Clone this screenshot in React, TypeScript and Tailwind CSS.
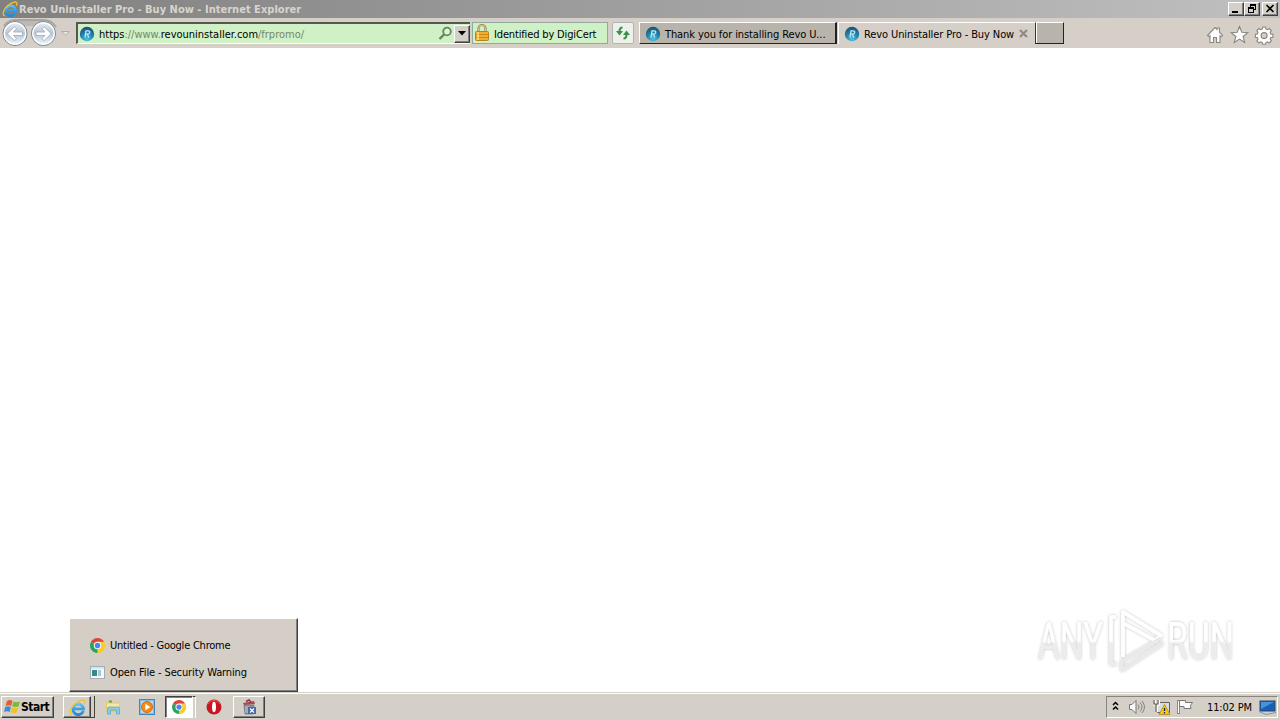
import type { ReactNode } from "react"


const raised = "border border-t-white border-l-white border-r-[#404040] border-b-[#404040] shadow-[inset_-1px_-1px_0_#808080]"

function RevoIcon() {
    return (
        <svg width="16" height="16" viewBox="0 0 16 16" className="shrink-0">
            <defs>
                <radialGradient id="revo" cx="50%" cy="85%" r="85%">
                    <stop offset="0" stopColor="#4cc4e4" />
                    <stop offset="0.55" stopColor="#1f7ea9" />
                    <stop offset="1" stopColor="#1d4f70" />
                </radialGradient>
            </defs>
            <circle cx="8" cy="8" r="7.2" fill="url(#revo)" />
            <path d="M6 11.500 7 4.800h2q2 0 1.700 1.800-.3 1.600-2.400 1.600H6.700M8.400 8.300l1.400 3.200" fill="none" stroke="#c5e6f2" strokeWidth="1.300" />
        </svg>
    )
}

function ExplorerIcon({ size = 16 }: { size?: number }) {
    return (
        <svg width={size} height={size} viewBox="0 0 16 16" className="shrink-0">
            <defs>
                <linearGradient id="explorer" x1="0" y1="2" x2="0" y2="15" gradientUnits="userSpaceOnUse">
                    <stop offset="0" stopColor="#7fd3f8" />
                    <stop offset="0.5" stopColor="#3ba6e8" />
                    <stop offset="1" stopColor="#2387d3" />
                </linearGradient>
            </defs>
            <path d="M13.500 11.200A5 5 0 1 1 13.700 9.300H5" fill="none" stroke="url(#explorer)" strokeWidth="2.600" />
            <path d="M2.800 15C-.3 13.800 1.200 8.500 5.800 4.600S14.800 0 15 2.300c0 .9-.3 1.700-.7 2.400" fill="none" stroke="#f2c22c" strokeWidth="1.300" />
        </svg>
    )
}

function ChromeIcon({ size = 14 }: { size?: number }) {
    return (
        <svg width={size} height={size} viewBox="0 0 16 16" className="shrink-0">
            <path d="M8 8 1.100 4A8 8 0 0 1 14.900 4Z" fill="#e14434" />
            <path d="M8 8 14.900 4A8 8 0 0 1 8 16Z" fill="#fbc92c" />
            <path d="M8 8V16A8 8 0 0 1 1.100 4Z" fill="#2ca35a" />
            <path d="M8 4h6.900A8 8 0 0 1 8 16l3.500-6Z" fill="#fbc92c" />
            <circle cx="8" cy="8" r="4" fill="#fff" />
            <circle cx="8" cy="8" r="3" fill="#4688ef" />
        </svg>
    )
}

function CaptionButton({ children, className = "" }: { children: ReactNode, className?: string }) {
    return (
        <div className={`w-4 h-[14px] bg-[#d4d0c8] ${raised} ${className}`}>
            <svg width="14" height="12" viewBox="0 0 14 12" fill="none" stroke="#000" shapeRendering="crispEdges">
                {children}
            </svg>
        </div>
    )
}

function TitleBar() {
    return (
        <div className="h-[18px] flex items-center bg-linear-to-r from-[#808080] to-[#c0c0c0] pl-[2px] pr-[2px]">
            <ExplorerIcon />
            <span className="flex-1 pl-[1px] text-[11px] font-bold text-[#d8d4cc] tracking-[0.02px]">Revo Uninstaller Pro - Buy Now - Internet Explorer</span>
            <CaptionButton>
                <path d="M3 9h6" strokeWidth="2" />
            </CaptionButton>
            <CaptionButton>
                <path d="M10.500 1v5.500H9M5.500 1v3" />
                <path d="M3.500 4v5.500h5V4" />
                <path d="M5 2h6M3 5h6" strokeWidth="2" />
            </CaptionButton>
            <CaptionButton className="ml-[2px]">
                <path d="m3.500 2 7 7m0-7-7 7" strokeWidth="1.600" shapeRendering="auto" />
            </CaptionButton>
        </div>
    )
}

function NavigationButtons() {
    return (
        <svg width="74" height="30" viewBox="0 0 74 30" className="shrink-0">
            <defs>
                <linearGradient id="nav" x1="0" y1="0" x2="0" y2="1">
                    <stop offset="0" stopColor="#eef1f4" />
                    <stop offset="0.5" stopColor="#b9c6d3" />
                    <stop offset="1" stopColor="#f0fbff" />
                </linearGradient>
            </defs>
            <path d="M4 8Q9 2 15 2h29q7 0 12 7" fill="none" stroke="#aaa49f" strokeWidth="2" />
            <path d="M15 3h29v5H15Z" fill="#bdb8b3" />
            <circle cx="15" cy="15.500" r="12" fill="url(#nav)" stroke="#78848f" />
            <circle cx="43.500" cy="15.500" r="12" fill="url(#nav)" stroke="#78848f" />
            <circle cx="15" cy="15.500" r="10.700" fill="none" stroke="#fff" strokeWidth="1.300" />
            <circle cx="43.500" cy="15.500" r="10.700" fill="none" stroke="#fff" strokeWidth="1.300" />
            <path d="M22.500 14v3.500H13.500l3 3.200-2 2-7.200-7 7.200-7 2 2-3 3.300Z" fill="#fff" stroke="#9aa8b6" strokeWidth="0.800" />
            <path d="M36 14v3.500H45l-3 3.200 2 2 7.200-7-7.200-7-2 2 3 3.300Z" fill="#fff" stroke="#9aa8b6" strokeWidth="0.800" />
            <path d="M61.500 13.500h8l-4 4Z" fill="#e6e1dc" stroke="#b4aea7" />
        </svg>
    )
}

function AddressBar() {
    return (
        <div className="w-[394px] h-[22px] mt-1 flex items-center bg-[#d0f1c5] border-t-2 border-l-2 border-t-[#555750] border-l-[#555750] border-b border-b-white pl-[1px]">
            <RevoIcon />
            <span className="flex-1 pl-1 pt-[1px] text-[11px] text-[#74876d] tracking-[-0.01px] whitespace-pre">
                <span className="text-black">https</span>://www.<span className="text-black">revouninstaller.com</span>/frpromo/
            </span>
            <svg width="15" height="15" viewBox="0 0 15 15" className="mr-[1px]">
                <path d="m1.500 13 5-5" stroke="#67865d" strokeWidth="2.400" />
                <circle cx="9" cy="5.500" r="3.800" fill="#dcf6d3" stroke="#67865d" strokeWidth="1.800" />
            </svg>
            <div className={`w-4 h-[18px] flex items-center justify-center bg-[#d4d0c8] ${raised}`}>
                <svg width="8" height="5" viewBox="0 0 8 5">
                    <path d="M0 0h8L4 4.500Z" />
                </svg>
            </div>
        </div>
    )
}

function SecurityBadge() {
    return (
        <div className="w-[136px] h-[22px] mt-1 ml-[2px] flex items-center bg-[#d0f1c5] border border-[#91aaa0] pl-[1px]">
            <svg width="16" height="18" viewBox="0 0 16 18">
                <path d="M4.500 9V4.500a3.500 3.500 0 0 1 7 0V9" fill="none" stroke="#9b844a" strokeWidth="2.200" />
                <path d="M4.500 8V4.500a3.500 3.500 0 0 1 7 0V8" fill="none" stroke="#e5d4a0" strokeWidth="0.800" />
                <rect x="1.500" y="7.500" width="13" height="9" rx="1" fill="#eeb02c" stroke="#b98220" />
                <path d="M2 10.500h12M2 13.500h12" stroke="#c98b1a" />
                <path d="M4 8v8" stroke="#ffe08a" strokeWidth="1.500" />
            </svg>
            <span className="pl-[4px] pt-[2px] text-[11px] tracking-[-0.15px] whitespace-nowrap">Identified by DigiCert</span>
        </div>
    )
}

function Tabs() {
    return (
        <div className="h-[22px] mt-1 ml-[5px] flex items-center">
            <div className="w-[198px] h-[22px] flex items-center bg-[#b9b4ab] border-t border-l border-white border-r-2 border-b border-r-[#222] border-b-[#222] pl-[5px]">
                <div className="pt-[1px]">
                    <RevoIcon />
                </div>
                <span className="pl-1 pt-[2px] text-[11px] tracking-[-0.1px] whitespace-nowrap">Thank you for installing Revo U...</span>
            </div>
            <div className="w-[197px] h-[22px] flex items-center border-t border-l border-white ml-[1px] pl-[5px]">
                <RevoIcon />
                <span className="flex-1 pl-1 pt-[1px] text-[11px] tracking-[-0.1px] whitespace-nowrap">Revo Uninstaller Pro - Buy Now</span>
                <svg width="9" height="9" viewBox="0 0 9 9" className="mr-[7px]">
                    <path d="m1 1 7 7m0-7-7 7" stroke="#8f8a85" strokeWidth="2.200" />
                </svg>
            </div>
            <div className="w-[29px] h-[22px] bg-[#b9b4ab] border-t border-l border-t-white border-l-[#333] border-r border-b border-r-[#222] border-b-[#222] shadow-[inset_1px_0_0_white]" />
        </div>
    )
}

function ToolbarIcons() {
    return (
        <svg width="76" height="30" viewBox="0 0 76 30" fill="#fff" stroke="#8b8780" strokeWidth="1.100" className="ml-auto">
            <path d="m3.500 17.500 7.500-8 2 2V10h2.500v4.200l3 3.300-1.700 1.200-.8-.8v6.600h-3.500v-5h-3v5H6v-6.600l-.8.8Z" />
            <path d="m35.500 8.500 2.300 5.700 6 .4-4.700 3.900 1.600 6-5.200-3.400-5.200 3.400 1.600-6-4.700-3.900 6-.4Z" />
            <path d="m58.600 9 3 0 .4 2.100 1.500.6 1.800-1.200 2.100 2.100-1.200 1.800.6 1.500 2.100.4v2.900l-2.100.4-.6 1.500 1.200 1.800-2.100 2.100-1.800-1.200-1.500.6-.4 1.900h-3l-.4-1.900-1.500-.6-1.800 1.200-2.100-2.100 1.200-1.800-.6-1.500-2.100-.4v-2.900l2.100-.4.6-1.500-1.200-1.800 2.100-2.100 1.800 1.200 1.500-.6Z" />
            <circle cx="60.100" cy="17.600" r="3" fill="#d4d0c8" />
        </svg>
    )
}

function Toolbar() {
    return (
        <div className="h-[30px] flex items-start bg-[#d6cfc8] text-black">
            <NavigationButtons />
            <div className="w-[2px]" />
            <AddressBar />
            <SecurityBadge />
            <div className="w-[22px] h-[22px] mt-1 ml-1 flex items-center justify-center rounded-[2px] bg-[#eef0ea] border border-[#b0b5b6]">
                <svg width="16" height="16" viewBox="0 0 16 16" fill="none" stroke="#369447" strokeWidth="2">
                    <path d="M7.500 2.500q-3 0-3 4" />
                    <path d="M1 6h7l-3.500 4.500Z" fill="#369447" stroke="none" />
                    <path d="M8.500 13.500q3 0 3-4" />
                    <path d="M8 10h7l-3.500-4.500Z" fill="#369447" stroke="none" />
                </svg>
            </div>
            <Tabs />
            <ToolbarIcons />
        </div>
    )
}

function Watermark() {
    return (
        <svg width="250" height="80" viewBox="0 0 250 80" className="absolute left-[1030px] top-[600px]">
            <defs>
                <linearGradient id="mark" x1="0" y1="20" x2="0" y2="62" gradientUnits="userSpaceOnUse">
                    <stop offset="0.5" stopColor="#fff" />
                    <stop offset="0.55" stopColor="#ececec" />
                </linearGradient>
                <filter id="halo" x="-10%" y="-20%" width="120%" height="140%">
                    <feDropShadow dx="0" dy="0" stdDeviation="1.600" floodColor="#000" floodOpacity="0.280" />
                </filter>
            </defs>
            <g filter="url(#halo)" fill="url(#mark)" fontFamily="Roboto, sans-serif" fontSize="51">
                <text x="8" y="59" textLength="65" lengthAdjust="spacingAndGlyphs">ANY</text>
                <text x="137" y="59" textLength="67" lengthAdjust="spacingAndGlyphs">RUN</text>
            </g>
            <g filter="url(#halo)" fill="none" strokeWidth="3.500" strokeLinejoin="round">
                <path d="M86 17h-5v47h5" stroke="url(#mark)" />
                <path d="M93 26V12l38 23.500-6 5L93 23v34" stroke="#fff" />
                <path d="M131 38 92 61v9l41-27" stroke="#e9e9e9" />
            </g>
        </svg>
    )
}

function WindowMenu() {
    return (
        <div className={`absolute left-[69px] top-[618px] w-[229px] h-[74px] flex flex-col bg-[#d4cec7] pt-[13px] pl-5 text-[11px] text-black ${raised}`}>
            <div className="h-[27px] flex items-center gap-[5px]">
                <ChromeIcon size={15} />
                <span className="tracking-[-0.23px]">Untitled - Google Chrome</span>
            </div>
            <div className="h-[27px] flex items-center gap-[5px]">
                <svg width="15" height="13" viewBox="0 0 15 13">
                    <rect x="0.500" y="0.500" width="14" height="12" fill="#f5f7f8" stroke="#a3adb5" />
                    <path d="M1 2h13" stroke="#c3d3df" />
                    <rect x="2" y="4" width="5" height="6" fill="#338b88" />
                    <path d="M8 4h3v6H8Z" fill="#a9c6d4" />
                </svg>
                <span className="tracking-[-0.12px]">Open File - Security Warning</span>
            </div>
        </div>
    )
}

function StartButton() {
    return (
        <div className={`w-[53px] h-[22px] flex items-center bg-[#d4d0c8] pl-[2px] ${raised}`}>
            <svg width="17" height="16" viewBox="0 0 17 16" className="shrink-0">
                <path d="M3 2q3-2 5.500 0L7.200 7Q4.500 5.500 1.500 7Z" fill="#e75e2b" />
                <path d="M9.500 2.500Q12 4 16 2.500L14.500 7.500q-3.500 1-6.300-.2Z" fill="#7cb83c" />
                <path d="M1.200 8q3-1.500 5.700 0l-1.300 5Q3 11.700 0 13Z" fill="#3e8cd6" />
                <path d="M7.900 8.300q3 1.300 6.300.2l-1.400 5q-3.200 1.300-6.200-.2Z" fill="#f5bf29" />
            </svg>
            <span className="text-[12px] font-bold tracking-[-0.5px]">Start</span>
        </div>
    )
}

function Tray() {
    return (
        <div className="ml-auto w-[172px] h-[22px] flex items-center border border-t-[#88847f] border-l-[#88847f] border-r-white border-b-white">
            <svg width="96" height="20" viewBox="0 0 96 20" fill="none">
                <path d="m6 8 2.500-2.500L11 8M6 12.500 8.500 10l2.500 2.500" stroke="#000" strokeWidth="1.500" />
                <path d="M22.500 7.500H25l4-4v13l-4-4h-2.500Z" fill="#f7f7f7" stroke="#777" />
                <path d="M31 7.500q2 2.500 0 5M33 5.500q4 4.500 0 9M35 4q5 6 0 12" stroke="#85817e" />
                <path d="M50.500 5.500h12v10h-12Z" fill="#d7dcdf" stroke="#66615d" />
                <path d="M47.500 3v4h4V3M49.500 7v8" stroke="#fff" strokeWidth="3" />
                <path d="M47 3v4h4V3M49 7v8" stroke="#554f4a" strokeWidth="1.200" />
                <path d="m57.500 7.500 5.500 10H52Z" fill="#fccb18" stroke="#9e7a0d" strokeWidth="0.700" />
                <path d="M57.500 11v3m0 1v1.500" stroke="#222" strokeWidth="1.300" />
                <path d="M71.500 3v14" stroke="#77716c" strokeWidth="2.500" />
                <path d="M71.500 4v12" stroke="#fff" />
                <path d="M72.500 3.500h6v2h7l-2 3 .5 3h-7v-2h-4.500Z" fill="#fafafa" stroke="#777" />
            </svg>
            <span className="pl-1 text-[11px] tracking-[-0.15px] whitespace-nowrap">11:02 PM</span>
            <svg width="17" height="15" viewBox="0 0 17 15" className="ml-auto mr-[1px]">
                <rect x="1" y="1" width="15" height="10" fill="#1660b5" stroke="#2c4669" />
                <path d="M2 2h13L2 9Z" fill="#4792d9" />
                <path d="m0 11 7 3 10-2v1l-10 2-7-3Z" fill="#7896b5" />
            </svg>
        </div>
    )
}

function Taskbar() {
    return (
        <div className="h-7 flex items-start bg-[#d4d0c8] border-t border-[#d4d0c8] shadow-[inset_0_1px_0_white] pt-[3px] pl-[1px] pr-[2px] text-black">
            <StartButton />
            <div className={`w-[28px] h-[22px] ml-[9px] flex items-center justify-center ${raised}`}>
                <ExplorerIcon size={17} />
            </div>
            <div className="w-[4px] h-[22px] flex justify-between border-b border-b-[#45413e]">
                <div className="w-[1px]" />
                <div className="w-[1px] bg-[#45413e]" />
            </div>
            <svg width="16" height="16" viewBox="0 0 16 16" className="mt-[3px] ml-[10px]">
                <path d="M1 2h5l1.500 1.500H15V13H1Z" fill="#e9ca64" />
                <path d="M2 4.500h12v5H2Z" fill="#f8e9a2" />
                <path d="M4 1.500h3v2H4Z" fill="#49ae68" />
                <path d="M2.500 15V9.500q0-1.500 1.500-1.500h9q1.500 0 1.500 1.500V15h-3v-4h-6v4Z" fill="#86cdec" stroke="#429fc7" strokeWidth="0.600" />
            </svg>
            <svg width="16" height="16" viewBox="0 0 16 16" className="mt-[3px] ml-[18px]">
                <rect x="0.500" y="0.500" width="15" height="15" fill="#81bbe8" stroke="#4784b7" />
                <path d="M2 2h12v12H2Z" fill="#b8d9f0" />
                <circle cx="8" cy="8" r="5.500" fill="#f28b16" stroke="#d56e08" />
                <path d="m6.300 4.700 5 3.300-5 3.300Z" fill="#fff" />
            </svg>
            <div className="w-[28px] h-[22px] ml-[10px] flex items-center justify-center bg-white border border-t-[#404040] border-l-[#404040] border-r-white border-b-white shadow-[inset_1px_1px_0_#808080]">
                <ChromeIcon />
            </div>
            <div className="w-[3px] h-[22px] border-r border-white border-t border-t-[#404040]" />
            <svg width="16" height="16" viewBox="0 0 16 16" className="mt-[3px] ml-[10px]">
                <circle cx="8" cy="8" r="7.500" fill="#c91620" />
                <path d="M2 5a7 7 0 0 1 12 0" fill="none" stroke="#e65a54" />
                <ellipse cx="8" cy="8" rx="2" ry="5.200" fill="#fff" />
            </svg>
            <div className={`w-8 h-[22px] ml-[11px] flex items-center justify-center ${raised}`}>
                <svg width="16" height="16" viewBox="0 0 16 16">
                    <path d="m2 4 11-2 1 3-11 1Z" fill="#b84250" />
                    <path d="M5 2.500 8 1l2 2" fill="none" stroke="#7f3c48" strokeWidth="1.500" />
                    <path d="M3 6h10l-1 9H4Z" fill="#8d929e" stroke="#656875" strokeWidth="0.700" />
                    <path d="M5 7v7m2-7v7" stroke="#c1c5cd" />
                    <rect x="7" y="8" width="8" height="7" fill="#3e69ab" />
                    <path d="m9 9.500 4 4m0-4-4 4" stroke="#fff" strokeWidth="1.200" />
                </svg>
            </div>
            <Tray />
        </div>
    )
}

export default function App() {
    return (
        <div className="relative w-[1280px] h-[720px] flex flex-col overflow-hidden bg-white font-['DejaVu_Sans_Condensed','DejaVu_Sans',sans-serif] leading-none">
            <TitleBar />
            <Toolbar />
            <main className="flex-1 bg-white" />
            <Taskbar />
            <WindowMenu />
            <Watermark />
        </div>
    )
}
